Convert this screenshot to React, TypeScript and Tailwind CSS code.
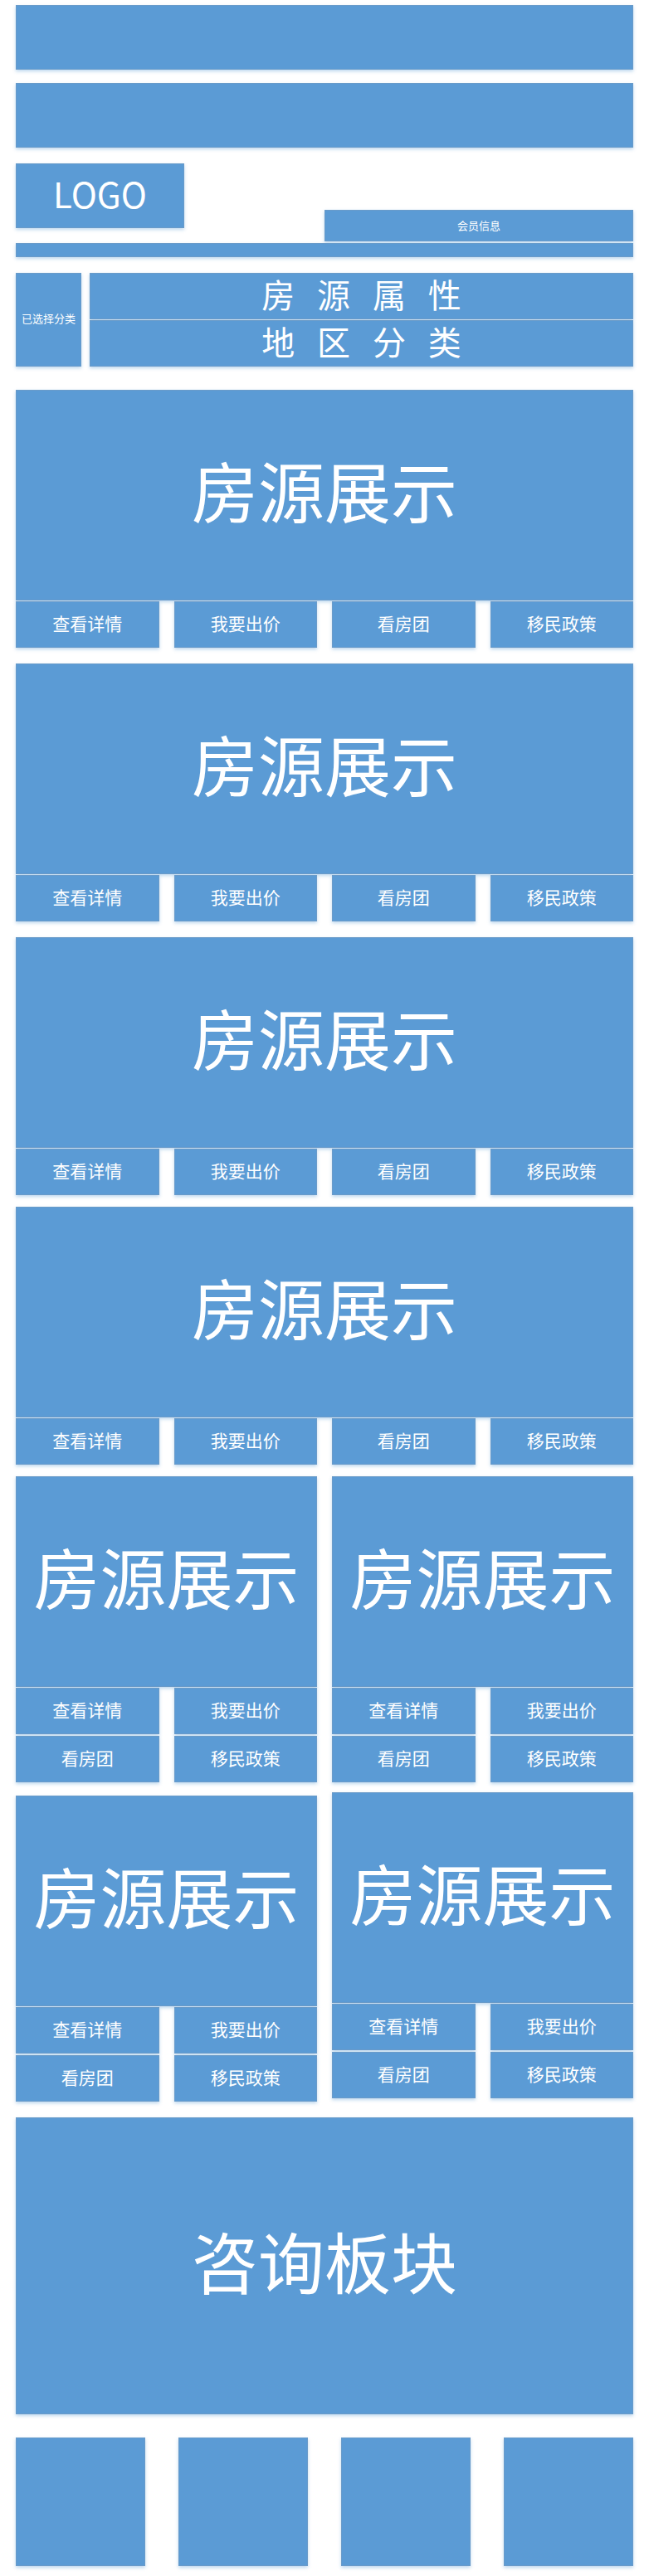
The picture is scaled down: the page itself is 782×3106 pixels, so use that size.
import type { ReactNode } from "react";

const tile =
  "flex items-center justify-center bg-[#5b9bd5] text-white border border-[#6a9bc9] shadow-[0_2px_4px_#5b9bd566]";

const actions = ["查看详情", "我要出价", "看房团", "移民政策"];

function Action({ children }: { children: ReactNode }) {
  return (
    <button type="button" className={`${tile} h-14 pb-1 text-[21px] leading-7`}>
      {children}
    </button>
  );
}

function Listing({ half = false }: { half?: boolean }) {
  return (
    <article className="flex flex-col gap-px">
      <h2 className={`${tile} h-[254px] pb-4 text-[80px] leading-none`}>房源展示</h2>
      <div
        className={
          half
            ? "grid grid-cols-2 gap-x-[18px] gap-y-0.5"
            : "grid grid-cols-4 gap-x-[18px]"
        }
      >
        {actions.map((label) => (
          <Action key={label}>{label}</Action>
        ))}
      </div>
    </article>
  );
}

export default function App() {
  return (
    <div className="min-h-screen bg-white px-[19px] pt-1.5 pb-3 font-['Noto_Sans_CJK_SC',sans-serif]">
      <header>
        <div className={`${tile} h-[78px]`} />
        <div className={`${tile} mt-4 h-[78px]`} />
        <div className="mt-[19px] flex items-start justify-between">
          <a href="#" className={`${tile} h-[78px] w-[203px] pb-1.5 text-[42px] leading-none`}>
            LOGO
          </a>
          <a href="#" className={`${tile} mt-14 h-[38px] w-1/2 text-[13px] leading-5`}>
            会员信息
          </a>
        </div>
        <div className={`${tile} mt-0.5 h-[17px]`} />
      </header>

      <section className="mt-[19px] flex gap-2.5">
        <div className={`${tile} w-[79px] shrink-0 pb-1 text-[13px] leading-5`}>已选择分类</div>
        <nav className="flex grow flex-col gap-px text-[40px] leading-none whitespace-pre">
          <a href="#" className={`${tile} h-14 pb-1.5`}>房   源   属   性</a>
          <a href="#" className={`${tile} h-14 pb-1.5`}>地   区   分   类</a>
        </nav>
      </section>

      <main>
        <div className="mt-7 flex flex-col gap-[19px]">
          <Listing />
          <Listing />
          <Listing />
        </div>
        <div className="mt-3.5 flex flex-col gap-3.5">
          <Listing />
          <div className="grid grid-cols-2 gap-[18px]">
            <div className="flex flex-col gap-4">
              <Listing half />
              <Listing half />
            </div>
            <div className="flex flex-col gap-3">
              <Listing half />
              <Listing half />
            </div>
          </div>
        </div>
        <section className={`${tile} mt-[19px] h-[358px] pb-4 text-[80px] leading-none`}>
          咨询板块
        </section>
      </main>

      <footer className="mt-7 grid grid-cols-4 gap-10">
        <div className={`${tile} h-[155px]`} />
        <div className={`${tile} h-[155px]`} />
        <div className={`${tile} h-[155px]`} />
        <div className={`${tile} h-[155px]`} />
      </footer>
    </div>
  );
}
